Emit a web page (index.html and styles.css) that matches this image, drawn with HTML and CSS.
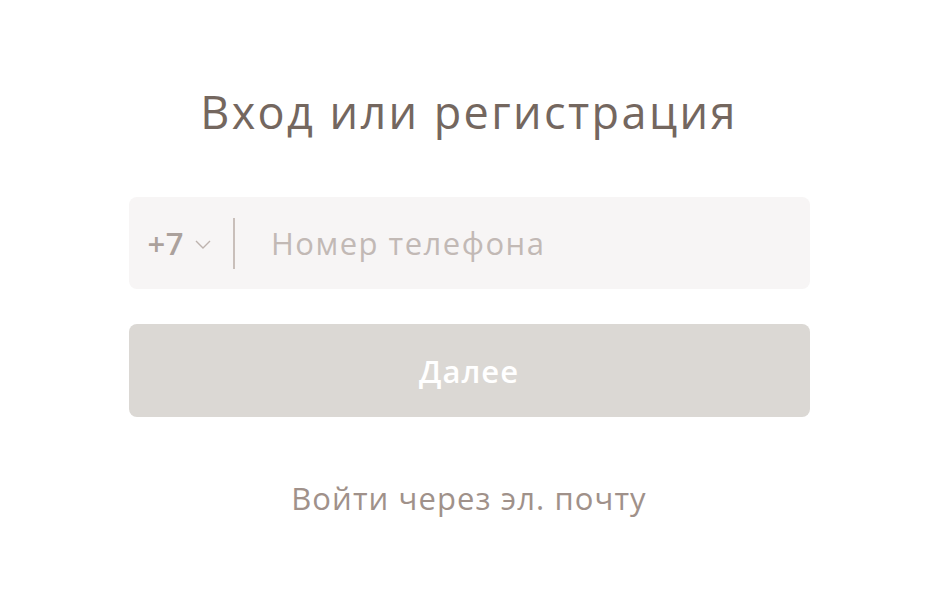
FILE: index.html
```html
<!DOCTYPE html>
<html lang="ru">
  <head>
    <meta charset="UTF-8" />
    <title>Вход или регистрация</title>
    <link rel="stylesheet" href="styles.css">
  </head>
  <body>
    <div class="auth">
      <h1 class="auth-title">Вход или регистрация</h1>

      <!-- Phone field -->
      <div class="phone-field">
        <div class="country">
          <span class="country-code">+7</span>
          <svg class="chevron" width="16" height="9" viewBox="0 0 16 9">
            <path d="M1 1l7 7 7-7" fill="none" stroke="#bdb3ae" stroke-width="1.4" />
          </svg>
        </div>
        <span class="divider"></span>
        <input type="text" class="phone-input" placeholder="Номер телефона" />
      </div>

      <button class="next-btn" disabled>Далее</button>

      <a class="email-link" href="#">Войти через эл. почту</a>
    </div>
  </body>
</html>
```

FILE: styles.css
```css
body {
  margin: 0;
  padding: 0;
  background: #fff;
  font-family: "Open Sans", "DejaVu Sans", sans-serif;
}

.auth {
  width: 681px;
  margin: 0 auto;
  padding-top: 82px;
  display: flex;
  flex-direction: column;
  align-items: center;
}

.auth-title {
  margin: 0;
  font-size: 45px;
  font-weight: 400;
  color: #74675f;
  letter-spacing: 2.4px;
  line-height: 60px;
}

/* Phone input box */
.phone-field {
  margin-top: 55px;
  width: 100%;
  height: 92px;
  box-sizing: border-box;
  background: #f7f5f5;
  border-radius: 8px;
  display: flex;
  align-items: center;
  padding-left: 19px;
}

.country {
  display: flex;
  align-items: center;
  gap: 11px;
}

.country-code {
  font-size: 31px;
  font-weight: 600;
  letter-spacing: 0.5px;
  color: #aba19c;
}

.chevron {
  margin-top: 2px;
}

.divider {
  width: 2px;
  height: 51px;
  background: #c9bfba;
  margin-left: 22px;
}

.phone-input {
  flex: 1;
  border: none;
  background: transparent;
  outline: none;
  font-family: inherit;
  font-size: 31px;
  letter-spacing: 1.5px;
  margin-left: 36px;
  padding: 0;
  color: #74675f;
}

.phone-input::placeholder {
  color: #c2b9b5;
}

/* Next button */
.next-btn {
  margin-top: 35px;
  width: 100%;
  height: 93px;
  border: none;
  border-radius: 8px;
  background: #dbd8d4;
  color: #fff;
  font-family: inherit;
  font-size: 31px;
  font-weight: 600;
  letter-spacing: 1px;
}

.email-link {
  margin-top: 60px;
  font-size: 31px;
  letter-spacing: 1.1px;
  color: #a0918a;
  text-decoration: none;
}
```
